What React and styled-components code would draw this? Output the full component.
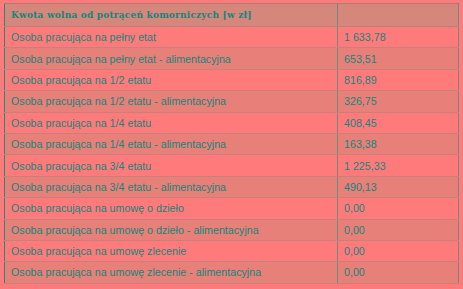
import React from 'react';
import styled, { createGlobalStyle } from 'styled-components';

const Global = createGlobalStyle`
  html, body {
    margin: 0;
    padding: 0;
    background: #ff7b7b;
  }
`;

const Wrapper = styled.div`
  padding: 3px 4px 0 4px;
  width: 463px;
  height: 289px;
  box-sizing: border-box;
  background: #ff7b7b;
`;

const Table = styled.table`
  width: 455px;
  border-collapse: collapse;
  border-left: 1px solid #1f8a80;
  border-right: 1px solid #6f8c82;
  border-top: 1px solid #b07a72;
  font-family: "Liberation Sans", Arial, sans-serif;
  font-size: 10.7px;
  color: #14867c;
`;

const HeadCell = styled.th`
  height: 22px;
  padding: 0 6px;
  text-align: left;
  font-family: "DejaVu Serif", serif;
  font-weight: bold;
  font-size: 9px;
  letter-spacing: 0.2px;
  background: #d4877a;
  border-bottom: 1px solid #b8827a;
  border-left: ${p => (p.$divider ? '1px solid #6f8c82' : 'none')};
`;

const Row = styled.tr`
  background: ${p => (p.$odd ? '#e8807a' : '#ff7b7b')};
`;

const Cell = styled.td`
  height: 20.4px;
  padding: 0 6px;
  border-bottom: 1px solid #c8807a;
  border-left: ${p => (p.$divider ? '1px solid #6f8c82' : 'none')};
  width: ${p => (p.$divider ? '108px' : 'auto')};
`;

const rows = [
  ['Osoba pracująca na pełny etat', '1 633,78'],
  ['Osoba pracująca na pełny etat - alimentacyjna', '653,51'],
  ['Osoba pracująca na 1/2 etatu', '816,89'],
  ['Osoba pracująca na 1/2 etatu - alimentacyjna', '326,75'],
  ['Osoba pracująca na 1/4 etatu', '408,45'],
  ['Osoba pracująca na 1/4 etatu - alimentacyjna', '163,38'],
  ['Osoba pracująca na 3/4 etatu', '1 225,33'],
  ['Osoba pracująca na 3/4 etatu - alimentacyjna', '490,13'],
  ['Osoba pracująca na umowę o dzieło', '0,00'],
  ['Osoba pracująca na umowę o dzieło - alimentacyjna', '0,00'],
  ['Osoba pracująca na umowę zlecenie', '0,00'],
  ['Osoba pracująca na umowę zlecenie - alimentacyjna', '0,00'],
];

export default function App() {
  return (
    <Wrapper>
      <Global />
      <Table>
        <thead>
          <tr>
            <HeadCell>Kwota wolna od potrąceń komorniczych [w zł]</HeadCell>
            <HeadCell $divider></HeadCell>
          </tr>
        </thead>
        <tbody>
          {rows.map(([label, value], i) => (
            <Row key={label} $odd={i % 2 === 1}>
              <Cell>{label}</Cell>
              <Cell $divider>{value}</Cell>
            </Row>
          ))}
        </tbody>
      </Table>
    </Wrapper>
  );
}
